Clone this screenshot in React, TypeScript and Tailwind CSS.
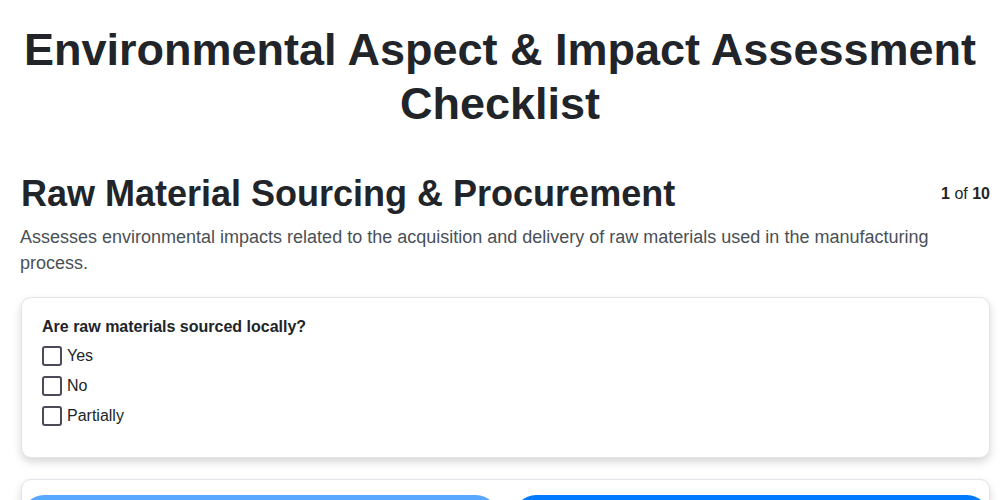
import { useState } from "react";

const options = ["Yes", "No", "Partially"];

export default function App() {
  const [picked, setPicked] = useState<string[]>([]);

  const toggle = (opt: string) => {
    setPicked((p) => (p.includes(opt) ? p.filter((o) => o !== opt) : [...p, opt]));
  };

  return (
    <div className="min-h-screen bg-white text-[#212529] font-['Liberation_Sans',Arial,sans-serif]">
      <h1 className="pt-[23px] text-center text-[45px] font-bold leading-[54px] px-5">
        Environmental Aspect &amp; Impact Assessment Checklist
      </h1>

      <div className="pl-5 pr-2.5 pt-[41px]">
        <div className="flex items-start justify-between">
          <h2 className="pl-px text-[36px] font-bold leading-[43px]">Raw Material Sourcing &amp; Procurement</h2>
          <div className="pt-[10px] text-[16px]">
            <span className="font-bold">1</span> of <span className="font-bold">10</span>
          </div>
        </div>
        <p className="mt-[9px] text-[18px] leading-[26px] text-[#495057]">
          Assesses environmental impacts related to the acquisition and delivery of raw materials used in the manufacturing
          process.
        </p>

        {/* Question card */}
        <div className="ml-px mt-[21px] rounded-[10px] border border-[#e4e4ea] bg-white px-5 pt-[19px] pb-[31px] shadow-[0_4px_8px_rgba(0,0,0,0.16)]">
          <p className="text-[16px] font-bold leading-[20px]">Are raw materials sourced locally?</p>
          <div className="mt-[9px] flex flex-col gap-[10px]">
            {options.map((opt) => (
              <label key={opt} className="flex h-[20px] cursor-pointer items-center gap-[5px] text-[16px]">
                <span
                  onClick={() => toggle(opt)}
                  className="flex h-[20px] w-[20px] items-center justify-center rounded-[3px] border-2 border-[#4a4a58]"
                >
                  {picked.includes(opt) && (
                    <svg viewBox="0 0 16 16" className="h-3.5 w-3.5" fill="none" stroke="#4a4a58" strokeWidth="2.5">
                      <path d="M3 8.5l3 3 7-7" />
                    </svg>
                  )}
                </span>
                <span onClick={() => toggle(opt)}>{opt}</span>
              </label>
            ))}
          </div>
        </div>

        {/* Navigation card */}
        <div className="ml-px mt-[21px] rounded-[10px] border border-[#e4e4ea] bg-white pt-[15px] pb-4 shadow-[0_4px_8px_rgba(0,0,0,0.16)]">
          <div className="grid grid-cols-2 gap-4">
            <button disabled className="h-[44px] rounded-[22px] bg-[#007aff] text-[16px] font-bold text-white opacity-65">
              Previous
            </button>
            <button className="h-[44px] rounded-[22px] bg-[#007aff] text-[16px] font-bold text-white">Next</button>
          </div>
        </div>
      </div>
    </div>
  );
}
